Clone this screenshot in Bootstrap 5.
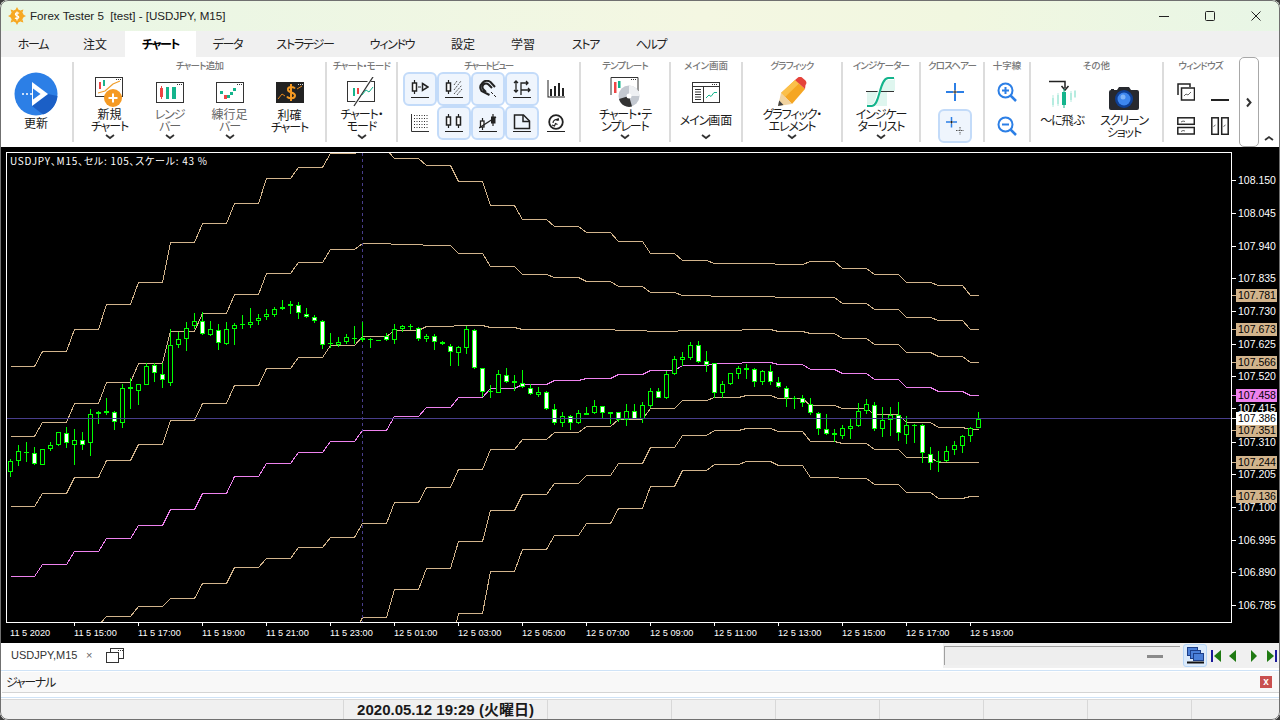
<!doctype html>
<html lang="ja">
<head>
<meta charset="utf-8">
<title>Forex Tester 5</title>
<link rel="stylesheet" href="https://cdn.jsdelivr.net/npm/bootstrap@5.3.0/dist/css/bootstrap.min.css">
<style>
html,body{margin:0;height:720px;overflow:hidden;background:#3c3c3c}
body{font-family:"Noto Sans CJK JP","Liberation Sans",sans-serif;font-size:12px;color:#222;font-feature-settings:"palt";line-height:1.2}
.ftwin{width:1280px;height:720px;position:relative;overflow:hidden;border-radius:8px;background:#f0f0f0}
.ftedge{position:absolute;inset:0;border:1px solid #707070;border-radius:8px;pointer-events:none}
.fttitle{height:31px;padding-right:1px;background:linear-gradient(90deg,#e8f6e5 0%,#f4f7e2 55%,#f1f7e0 75%,#e8f6e6 100%);font-family:"Liberation Sans",sans-serif;font-size:11.6px;color:#222}
.fttitle svg.logo{margin:0 4px 0 8px}
.titletxt{white-space:pre}
.winbtn{width:46px;height:31px}
.fttabs{height:26px;background:#f0f0f0;padding-left:1px}
.fttab{line-height:26px;font-size:12px;color:#222;white-space:nowrap;text-align:center;letter-spacing:-1.3px}
.fttab.kj{letter-spacing:0}
.fttab.on{background:#fff;font-weight:700;color:#000;letter-spacing:-1.5px}
.tw64{width:64px}.tw60{width:60px}.tw71{width:71px}.tw63{width:63px}.tw92{width:92px}.tw82{width:82px}.tw65{width:65px}.tw66{width:66px}
.ribbon{height:90px;background:#fff;position:relative}
.sepv{width:2px;background:#dcdcdc;margin:5px 0;flex:none}
.grp{flex:none;display:flex;flex-direction:column;align-items:stretch}
.gt{height:15px;line-height:16px;text-align:center;font-size:9.5px;color:#777;white-space:nowrap;font-weight:500;letter-spacing:-.8px}
.gtt{letter-spacing:-1.5px}
.gtk{letter-spacing:0}
.gb{flex:1;display:flex;justify-content:center}
.w72{width:72px}.w251{width:251px}.w69{width:69px}.w181{width:181px}.w88{width:88px}.w70{width:70px}.w98{width:98px}.w76{width:76px}.w62{width:62px}.w44{width:44px}.w131{width:131px}.w73{width:73px}
.rb{display:flex;flex-direction:column;align-items:center;width:60px;flex:none}
.rbw{width:88px}
.ia{height:36px;padding-top:4px;display:flex;align-items:center;justify-content:center}
.iacam{height:42px;padding-top:9px;display:flex;align-items:center;justify-content:center}
.iajmp{height:36px;padding-top:10px;display:flex;align-items:center;justify-content:center}
.lb{height:24px;line-height:12px;text-align:center;font-size:12px;color:#1a1a1a;display:flex;align-items:center;justify-content:center;white-space:nowrap;letter-spacing:-1.1px}
.lbk{letter-spacing:0}
.lbg{color:#666}
.lbd{padding-top:2px}
.lbone{height:14px}
.cv{height:10px;display:flex;align-items:center;justify-content:center}
.cellgrid{display:grid;grid-template-columns:repeat(5,34px);grid-auto-rows:34px;margin-left:5px;width:170px}
.cl{display:flex;align-items:center;justify-content:center;border:2px solid transparent;border-radius:6px}
.cl.hl{background:#eff5fd;border-color:#c3dbf9}
.updbtn{padding-top:15px;width:72px}
.updia{height:44px;display:flex;align-items:center;justify-content:center}
.stack2{display:flex;flex-direction:column;align-items:center;width:100%}
.sq34{width:34px;height:34px;display:flex;align-items:center;justify-content:center;border:2px solid transparent;border-radius:6px}
.sq34.hl{background:#eff5fd;border-color:#c3dbf9}
.crossw{margin-top:3px}
.crossr{padding-left:6px}
.oth{display:flex}
.oth1,.oth2{width:62px;display:flex;flex-direction:column;align-items:center}
.win4{display:grid;grid-template-columns:34px 34px;grid-auto-rows:34px;margin:3px 0 0 5px}
.scrbtn{position:absolute;left:1239px;top:0;width:20px;height:90px;border:1px solid #a8a8a8;border-radius:5px;background:#fff;display:flex;align-items:center;justify-content:center}
.collapse-up{position:absolute;left:1264px;top:72px}
.chartbox{height:496px;background:#000;line-height:0}
.strip{height:25px;background:#fff;font-family:"Liberation Sans",sans-serif;font-size:11px;color:#333}
.strip .tabname{margin-left:11px;width:66px}
.strip .xx{margin-left:9px;color:#666;font-size:11px}
.strip .cpy{margin-left:14px}
.navside{width:337px;height:25px;background:#f0f0f0;padding-left:1px}
.scrollish{width:236px;height:19px;background:#eee;border-top:1px solid #a0a0a0;border-left:1px solid #a0a0a0;display:flex;align-items:center;justify-content:flex-end;padding-right:17px}
.dashg{width:16px;height:3px;background:#8a8a8a}
.stkbtn{width:24px;height:23px;margin-left:3px;background:#dbeafb;border:1px solid #b7d6f7;border-radius:3px;display:flex;align-items:center;justify-content:center}
.n1{margin-left:4px}.n2{margin-left:8px}.n3{margin-left:15px}.n4{margin-left:10px}
.jrn{height:31px;background:#fff;padding-top:2px}
.jrnw{height:28px;border-top:1px solid #cfe3f7;border-bottom:1px solid #cfe3f7;padding:1px 0 0 2px}
.jrnin{height:21px;background:#f8f8f8;border-bottom:1px solid #d4d4d4;padding:0 8px 0 4px;font-size:12px;letter-spacing:-1.3px}
.jx{width:12px;height:12px;background:#c9504f;color:#fff;font:700 10px/12px "Liberation Sans",sans-serif;text-align:center;letter-spacing:0}
.stat{height:21px;background:#f0f0f0;border-top:1px solid #d8d8d8}
.stc{height:20px;border-right:1px solid #d8d8d8;flex:none}
.st1{width:344px}.st2{width:204px;font:700 15px/20px "Liberation Sans","Noto Sans CJK JP",sans-serif;text-align:center;color:#1a1a1a;white-space:nowrap}.st3{width:124px}.st4{width:104px}
</style>
</head>
<body>
<div class="ftwin d-flex flex-column">

<div class="fttitle d-flex align-items-center">
<svg class="logo" width="18" height="18" viewBox="0 0 18 18"><g fill="#f7a823"><circle cx="9" cy="9" r="6.500"/><path d="M9 0l1.600 3h-3.200zM9 18l1.600-3h-3.200zM0 9l3-1.600v3.200zM18 9l-3-1.600v3.200zM2.600 2.600l3.200 1-2.200 2.200zM15.400 2.600l-3.200 1 2.200 2.200zM2.600 15.400l3.200-1-2.200-2.200zM15.400 15.400l-3.200-1 2.200-2.200z"/></g><path d="M11 6.400c-.5-.8-3.600-1.200-3.600.8 0 1.900 3.400 1.100 3.400 3 0 1.700-3 1.600-3.800.7M9 4.500v9" fill="none" stroke="#fff" stroke-width="1.200"/></svg>
<span class="flex-grow-1 titletxt">Forex Tester 5  [test] - [USDJPY, M15]</span>
<div class="winbtn d-flex align-items-center justify-content-center"><svg width="12" height="12"><path d="M1 6.500h10" stroke="#222"/></svg></div>
<div class="winbtn d-flex align-items-center justify-content-center"><svg width="12" height="12"><rect x="1.500" y="1.500" width="9" height="9" rx="1" fill="none" stroke="#222"/></svg></div>
<div class="winbtn d-flex align-items-center justify-content-center"><svg width="12" height="12"><path d="M1.500 1.500l9 9M10.500 1.500l-9 9" stroke="#222"/></svg></div>
</div>

<div class="fttabs d-flex">
<div class="fttab tw64">ホーム</div><div class="fttab kj tw60">注文</div><div class="fttab on tw71">チャート</div><div class="fttab tw63">データ</div><div class="fttab tw92">ストラテジー</div><div class="fttab tw82">ウィンドウ</div><div class="fttab kj tw60">設定</div><div class="fttab kj tw60">学習</div><div class="fttab tw65">ストア</div><div class="fttab tw66">ヘルプ</div>
</div>

<div class="ribbon d-flex">
 <div class="grp w72"><div class="updbtn d-flex flex-column align-items-center">
  <div class="updia"><svg width="44" height="44" viewBox="0 0 44 44"><circle cx="22" cy="22" r="21.500" fill="#2c7fe6"/><path d="M18 34L34 22 43.500 24A21.500 21.500 0 0 1 29 42.500z" fill="#1b5fc6"/><path d="M18 10l16 12-16 12z" fill="#fff"/><path d="M19 16.500l7.500 5.500-7.500 5.500z" fill="#2c7fe6"/><path d="M8 22h2M12 22h2M16 22h3" stroke="#fff" stroke-width="1.500"/></svg></div>
  <div class="lb lbone lbk">更新</div></div></div>
 <div class="sepv"></div>
 <div class="grp w251"><div class="gt">チャート追加</div><div class="gb">
  <div class="rb"><div class="ia"><svg width="30" height="30" viewBox="0 0 30 30"><rect x=".5" y=".5" width="27" height="19" fill="#fff" stroke="#333"/><path d="M21 2.500h1M23 2.500h1M25 2.500h1" stroke="#333"/><path d="M4 5h2v7H4z" fill="#e44"/><path d="M8 3h2v6H8z" fill="#1bb38e"/><path d="M3 16l7-2 8-7 7-3" fill="none" stroke="#f0a030" stroke-width="1.300"/><circle cx="18" cy="21" r="9" fill="#f59a23"/><path d="M18 16.500v9M13.500 21h9" stroke="#fff" stroke-width="2"/></svg></div><div class="lb"><div><span class="lbk">新規</span><br>チャート</div></div><div class="cv"><svg width="10" height="6"><path d="M1 1l4 3 4-3" fill="none" stroke="#333" stroke-width="1.800"/></svg></div></div>
  <div class="rb"><div class="ia"><svg width="28" height="21" viewBox="0 0 28 21"><rect x=".5" y=".5" width="27" height="20" fill="#fff" stroke="#333"/><path d="M21 2.500h1M23 2.500h1M25 2.500h1" stroke="#333"/><path d="M4 6h3v9H4z" fill="#e44"/><path d="M5.500 4v13" stroke="#e44"/><path d="M10 5h3v12h-3zM16 5h4v12h-4z" fill="#14b48c"/></svg></div><div class="lb lbg"><div>レンジ<br>バー</div></div><div class="cv"><svg width="10" height="6"><path d="M1 1l4 3 4-3" fill="none" stroke="#333" stroke-width="1.800"/></svg></div></div>
  <div class="rb"><div class="ia"><svg width="28" height="21" viewBox="0 0 28 21"><rect x=".5" y=".5" width="27" height="20" fill="#fff" stroke="#333"/><path d="M21 2.500h1M23 2.500h1M25 2.500h1" stroke="#333"/><path d="M4 9h3v3H4z" fill="#14b48c"/><path d="M8 13h3v4H8z" fill="#e44"/><path d="M11 13h3v3h-3zM14 10h3v3h-3zM17 6h3v3h-3z" fill="#14b48c"/></svg></div><div class="lb lbg"><div><span class="lbk">練行足</span><br>バー</div></div><div class="cv"><svg width="10" height="6"><path d="M1 1l4 3 4-3" fill="none" stroke="#333" stroke-width="1.800"/></svg></div></div>
  <div class="rb"><div class="ia"><svg width="28" height="21" viewBox="0 0 28 21"><rect width="28" height="21" fill="#222"/><path d="M2 17l4-5 3 2" fill="none" stroke="#e88a1f"/><path d="M19 6.500C17 4 11.500 4.500 12 8c.5 3 7 2 7 5.500 0 3.500-6.500 3.500-8 1M15 2v17" fill="none" stroke="#f59a23" stroke-width="2"/><path d="M21 7l5-3" stroke="#e88a1f"/><path d="M22 2.500h1M24 2.500h1M26 2.500h1" stroke="#ddd"/></svg></div><div class="lb lbd"><div><span class="lbk">利確</span><br>チャート</div></div></div>
 </div></div>
 <div class="sepv"></div>
 <div class="grp w69"><div class="gt">チャート・モード</div><div class="gb">
  <div class="rb"><div class="ia"><svg width="30" height="30" viewBox="0 0 30 30"><rect x=".5" y="4.500" width="27" height="20" fill="#fff" stroke="#333"/><path d="M8 28L25 0" stroke="#fff" stroke-width="3"/><path d="M7 29L26 0" stroke="#333" stroke-width="1.300"/><path d="M6 11h2v8H6z" fill="#14b48c"/><path d="M10 11h2v6h-2z" fill="#e44"/><path d="M15 18l4-5 3 2 4-5" fill="none" stroke="#14b48c"/></svg></div><div class="lb"><div>チャート・<br>モード</div></div><div class="cv"><svg width="10" height="6"><path d="M1 1l4 3 4-3" fill="none" stroke="#333" stroke-width="1.800"/></svg></div></div>
 </div></div>
 <div class="sepv"></div>
 <div class="grp w181"><div class="gt gtt">チャートビュー</div>
  <div class="cellgrid">
   <div class="cl hl"><svg width="18" height="18" viewBox="0 0 18 18" fill="none" stroke="#222"><path d="M3.500 0v14" stroke-width="1.200"/><rect x="1.500" y="3" width="4" height="8" fill="#fff" stroke-width="1.500"/><path d="M7 7h3"/><path d="M11.500 3.500L17 7l-5.500 3.500z" stroke-width="1.500"/><path d="M0 17.500h18"/></svg></div>
   <div class="cl hl"><svg width="18" height="18" viewBox="0 0 18 18" fill="none" stroke="#222"><path d="M3.500 0v14" stroke-width="1.200"/><rect x="1.500" y="3" width="4" height="8" fill="#fff" stroke-width="1.500"/><path d="M9 5l3-4M9 10l7-9M9 14l8-9M12 15l5-6" stroke="#555" stroke-dasharray="2 1"/><path d="M0 17.500h18"/></svg></div>
   <div class="cl hl"><svg width="18" height="18" viewBox="0 0 18 18" fill="none" stroke="#222"><path d="M7 12L4.500 9.500a3.500 3.500 0 0 1 5-5L13 8M10.500 15L2.500 11A6.500 6.500 0 0 1 11.500 2L16 7" stroke-width="2"/><path d="M12 12l2 2M15 15l2 2"/></svg></div>
   <div class="cl hl"><svg width="18" height="18" viewBox="0 0 18 18" fill="none" stroke="#222" stroke-width="1.300"><path d="M3 1v11M1 3l2-2 2 2M1 10l2 2 2-2M8 15V3h7M13 1l2 2-2 2M8 10h9M15 8l2 2-2 2"/><path d="M0 17.500h18" stroke-width="1"/></svg></div>
   <div class="cl"><svg width="18" height="18" viewBox="0 0 18 18" fill="#222"><path d="M.5 0v17.500H18V16.500H1.500V0z"/><path d="M3 9h2v7H3zM7 6h2v10H7zM11 3h2v13h-2zM15 8h2v8h-2z"/></svg></div>
   <div class="cl"><svg width="18" height="18" viewBox="0 0 18 18"><path d="M.5 0v17.500H18" fill="none" stroke="#333"/><path d="M3 1.500h15M3 4.500h15M3 7.500h15M3 10.500h15M3 13.500h15" stroke="#333" stroke-dasharray="1 1.500"/></svg></div>
   <div class="cl hl"><svg width="18" height="18" viewBox="0 0 18 18" fill="none" stroke="#222"><path d="M3.500 0v14M13.500 0v14" stroke-width="1.200"/><rect x="1.500" y="3" width="4" height="8" fill="#fff" stroke-width="1.500"/><rect x="11.500" y="3" width="4" height="8" fill="#fff" stroke-width="1.500"/><path d="M0 17.500h18"/></svg></div>
   <div class="cl hl"><svg width="18" height="18" viewBox="0 0 18 18" fill="none" stroke="#222"><path d="M3.500 4v12M14 0v12" stroke-width="1.200"/><rect x="1.500" y="7" width="3.500" height="6" fill="#fff" stroke-width="1.300"/><rect x="12.500" y="3" width="3.500" height="6" fill="#222"/><path d="M0 14L17 3" stroke-width="1.300"/><path d="M0 17.500h18"/></svg></div>
   <div class="cl hl"><svg width="18" height="18" viewBox="0 0 18 18" fill="none" stroke="#222" stroke-width="1.500"><path d="M1.500 14.500V1h9l6 6v7.500z"/><path d="M10 1v6.500h6.500"/><path d="M0 17.500h18" stroke-width="1"/></svg></div>
   <div class="cl"><svg width="18" height="18" viewBox="0 0 18 18" fill="none" stroke="#222"><circle cx="9" cy="8" r="6.800" stroke-width="1.800"/><path d="M6 9c0-3 3-4 5-3.500M11 4l.5 2-2 .5M5 11l2.500 1 1-2.500 2 1" stroke-width="1.200"/><path d="M0 17.500h18"/></svg></div>
  </div>
 </div>
 <div class="sepv"></div>
 <div class="grp w88"><div class="gt">テンプレート</div><div class="gb">
  <div class="rb rbw"><div class="ia"><svg width="30" height="30" viewBox="0 0 30 30"><path d="M1 18V.5h27V14" fill="#fff" stroke="#333"/><path d="M21 2.500h1M23 2.500h1M25 2.500h1" stroke="#333"/><path d="M4 5h2.500v11H4z" fill="#e44"/><path d="M8 4h2.500v7H8z" fill="#14b48c"/><circle cx="19" cy="19" r="10.500" fill="#c3c8d0"/><path d="M19 19L9 22a10.500 10.500 0 0 0 13 7.500z" fill="#333"/><path d="M19 8.500a10.500 10.500 0 0 1 10.500 10.500H19z" fill="#eef0f3"/><circle cx="19" cy="19" r="2.500" fill="#fff"/></svg></div><div class="lb"><div>チャート・テ<br>ンプレート</div></div><div class="cv"><svg width="10" height="6"><path d="M1 1l4 3 4-3" fill="none" stroke="#333" stroke-width="1.800"/></svg></div></div>
 </div></div>
 <div class="sepv"></div>
 <div class="grp w70"><div class="gt gtk">メイン画面</div><div class="gb">
  <div class="rb"><div class="ia"><svg width="28" height="21" viewBox="0 0 28 21" fill="none" stroke="#333"><rect x=".5" y=".5" width="27" height="20"/><path d="M.5 4.500h27M11.500 4.500v16"/><path d="M20 2.500h1M22 2.500h1M24 2.500h1"/><path d="M3 7.500h6M3 10h6M3 12.500h6M3 15h6M3 17.500h6"/><path d="M14 16l3-3 2 1.500 3-4 3 0" stroke="#14b48c"/></svg></div><div class="lb"><span>メイン<span class="lbk">画面</span></span></div><div class="cv"><svg width="10" height="6"><path d="M1 1l4 3 4-3" fill="none" stroke="#333" stroke-width="1.800"/></svg></div></div>
 </div></div>
 <div class="sepv"></div>
 <div class="grp w98"><div class="gt">グラフィック</div><div class="gb">
  <div class="rb rbw"><div class="ia"><svg width="30" height="30" viewBox="0 0 30 30"><path d="M4 16L18 3l10 9-13 15z" fill="#f5a623"/><path d="M4 16L18 3l4 3.500L8 20z" fill="#fbc04a"/><path d="M18 3l3-2.500a3 3 0 0 1 4 0l3.500 3a3.500 3.500 0 0 1 0 4.500L28 12z" fill="#e5423a"/><path d="M4 16l-3 13 14-2z" fill="#f1d3a0"/><path d="M2.200 23.500L1 29l5.500-1z" fill="#444"/></svg></div><div class="lb"><div>グラフィック・<br>エレメント</div></div><div class="cv"><svg width="10" height="6"><path d="M1 1l4 3 4-3" fill="none" stroke="#333" stroke-width="1.800"/></svg></div></div>
 </div></div>
 <div class="sepv"></div>
 <div class="grp w76"><div class="gt">インジケーター</div><div class="gb">
  <div class="rb rbw"><div class="ia"><svg width="30" height="30" viewBox="0 0 30 30"><path d="M1 15h8c5 0 5-14 12-14h8v13h-8v15H1z" fill="#dff6ef"/><path d="M0 14.500h28" stroke="#333"/><path d="M2 29h4c7 0 6-26 15-27.500h7" fill="none" stroke="#fff" stroke-width="3"/><path d="M1 29h5c8 0 7-27 16-28h6" fill="none" stroke="#14b48c" stroke-width="2"/></svg></div><div class="lb"><div>インジケー<br>ターリスト</div></div><div class="cv"><svg width="10" height="6"><path d="M1 1l4 3 4-3" fill="none" stroke="#333" stroke-width="1.800"/></svg></div></div>
 </div></div>
 <div class="sepv"></div>
 <div class="grp w62"><div class="gt">クロスヘアー</div>
  <div class="stack2 crossw crossr"><div class="sq34"><svg width="18" height="18" viewBox="0 0 18 18"><path d="M0 9h7M11 9h7M9 0v7M9 11v7" stroke="#2c7fe6" stroke-width="2"/><path d="M7 9h4M9 7v4" stroke="#222"/></svg></div>
  <div class="sq34 hl"><svg width="18" height="18" viewBox="0 0 18 18"><path d="M0 5h4M7 5h4M5.500 0v4M5.500 6.500v4" stroke="#2c7fe6" stroke-width="1.500"/><path d="M4 5h3M5.500 4v2.500" stroke="#222"/><path d="M10 13.500h8M14 10v8" stroke="#555" stroke-dasharray="1.500 1"/></svg></div></div>
 </div>
 <div class="sepv"></div>
 <div class="grp w44"><div class="gt gtk">十字線</div>
  <div class="stack2 crossw"><div class="sq34"><svg width="20" height="20" viewBox="0 0 20 20" fill="none" stroke="#2c7fe6" stroke-width="2"><circle cx="8.500" cy="8.500" r="7"/><path d="M13.500 13.500l5.500 5.500" stroke-width="2.500"/><path d="M5 8.500h7M8.500 5v7"/></svg></div>
  <div class="sq34"><svg width="20" height="20" viewBox="0 0 20 20" fill="none" stroke="#2c7fe6" stroke-width="2"><circle cx="8.500" cy="8.500" r="7"/><path d="M13.500 13.500l5.500 5.500" stroke-width="2.500"/><path d="M5 8.500h7"/></svg></div></div>
 </div>
 <div class="sepv"></div>
 <div class="grp w131"><div class="gt gtk">その他</div><div class="oth">
  <div class="oth1"><div class="iajmp"><svg width="28" height="30" viewBox="0 0 28 30"><path d="M1 1.500h16V8M13.500 6l3.500 4 3.500-4" fill="none" stroke="#222" stroke-width="1.500"/><path d="M4 18h2v7H4zM9 15h2v9H9zM22 13h2v7h-2zM26 11h2v6h-2z" fill="#b6ece0"/><path d="M5 15v12M10 13v13M23 11v11M27 10v8" stroke="#b6ece0"/><path d="M14 12h4v13h-4z" fill="#14b48c"/><path d="M16 9v19" stroke="#14b48c"/></svg></div><div class="lb"><span>〜に<span class="lbk">飛</span>ぶ</span></div></div>
  <div class="oth2"><div class="iacam"><svg width="30" height="24" viewBox="0 0 30 24"><path d="M0 6a2 2 0 0 1 2-2h6l2-3h10l2 3h6a2 2 0 0 1 2 2v16a2 2 0 0 1-2 2H2a2 2 0 0 1-2-2z" fill="#27292f"/><path d="M2 3h3v1H2z" fill="#27292f"/><circle cx="15" cy="13" r="9" fill="#0e3f94"/><circle cx="15" cy="13" r="6.500" fill="#3d86ee"/><circle cx="14" cy="11" r="2.500" fill="#7fb4f7"/></svg></div><div class="lb"><div>スクリーン<br>ショット</div></div></div>
 </div></div>
 <div class="sepv"></div>
 <div class="grp w73"><div class="gt">ウィンドウズ</div>
  <div class="win4">
   <div class="sq34"><svg width="18" height="18" viewBox="0 0 18 18" fill="none" stroke="#222" stroke-width="1.500"><path d="M1 12V1h12v3"/><rect x="4.500" y="5" width="13" height="12" fill="#fff"/><path d="M7 13l2-2 2 1 3-3" stroke="#666" stroke-width="1"/></svg></div>
   <div class="sq34"><svg width="18" height="18" viewBox="0 0 18 18"><path d="M0 17h18" stroke="#222" stroke-width="2"/></svg></div>
   <div class="sq34"><svg width="18" height="18" viewBox="0 0 18 18" fill="none" stroke="#222" stroke-width="1.500"><rect x=".8" y=".8" width="16.500" height="6.500"/><rect x=".8" y="10.500" width="16.500" height="6.500"/><path d="M4 5l2-1 2 .5M4 14.500l2-1 2 .5" stroke="#666" stroke-width="1"/></svg></div>
   <div class="sq34"><svg width="18" height="18" viewBox="0 0 18 18" fill="none" stroke="#222" stroke-width="1.500"><rect x=".8" y=".8" width="6.500" height="16.500"/><rect x="10.700" y=".8" width="6.500" height="16.500"/><path d="M2.500 9.500l2-1.500M12.500 9.500l2-1.500" stroke="#666" stroke-width="1"/></svg></div>
  </div>
 </div>
 <div class="scrbtn"><svg width="8" height="11"><path d="M2 1.500l3.500 4-3.500 4" fill="none" stroke="#333" stroke-width="2"/></svg></div>
 <div class="collapse-up"><svg width="10" height="6"><path d="M1 5l4-3 4 3" fill="none" stroke="#333" stroke-width="1.800"/></svg></div>
</div>

<div class="chartbox"><svg id="chart" width="1280" height="496" viewBox="0 147 1280 496" shape-rendering="crispEdges" font-family="Liberation Sans, Noto Sans CJK JP, sans-serif" xmlns="http://www.w3.org/2000/svg"></svg></div>

<div class="strip d-flex align-items-center">
 <span class="tabname">USDJPY,M15</span><span class="xx">×</span>
 <svg class="cpy" width="18" height="15" viewBox="0 0 18 15" fill="none" stroke="#333"><rect x="4.500" y=".5" width="13" height="10" fill="#fff"/><path d="M12 2.500h1M14 2.500h1M16 2.500h1"/><rect x=".5" y="4.500" width="12" height="10" fill="#fff"/></svg>
 <span class="flex-grow-1"></span>
 <div class="navside d-flex align-items-center">
  <div class="scrollish"><div class="dashg"></div></div>
  <div class="stkbtn"><svg width="19" height="17" viewBox="0 0 19 17"><g fill="#4a7fd8" stroke="#1d3f88"><rect x="1.500" y=".5" width="10" height="8"/><rect x="4.500" y="3.500" width="10" height="8"/><rect x="7.500" y="6.500" width="10" height="7"/></g><path d="M1 15.500h17" stroke="#111" stroke-width="2"/></svg></div>
  <svg class="n1" width="10" height="12" viewBox="0 0 10 12"><path d="M0 0h2v12H0z" fill="#1a1a9a"/><path d="M10 0v12L3 6z" fill="#1f7a12"/></svg>
  <svg class="n2" width="7" height="12" viewBox="0 0 7 12"><path d="M7 0v12L0 6z" fill="#1f7a12"/></svg>
  <svg class="n3" width="6" height="12" viewBox="0 0 6 12"><path d="M0 0v12l6-6z" fill="#1f7a12"/></svg>
  <svg class="n4" width="10" height="12" viewBox="0 0 10 12"><path d="M8 0h2v12H8z" fill="#1a1a9a"/><path d="M0 0v12l7-6z" fill="#1f7a12"/></svg>
 </div>
</div>

<div class="jrn"><div class="jrnw"><div class="jrnin d-flex align-items-center justify-content-between"><span>ジャーナル</span><span class="jx">x</span></div></div></div>

<div class="stat d-flex">
 <div class="stc st1"></div><div class="stc st2">2020.05.12 19:29 (火曜日)</div><div class="stc st3"></div><div class="stc st4"></div><div class="stc st4"></div><div class="stc st4"></div><div class="stc st4"></div><div class="stc st4"></div>
</div>

<div class="ftedge"></div>
</div>

<script src="https://cdn.jsdelivr.net/npm/bootstrap@5.3.0/dist/js/bootstrap.bundle.min.js"></script>
<script>
// [wickTop, bodyTop, bodyBottom, wickBottom, white?] in zoomed pixels
var z6=[[508,514,545,560,0],[465,484,514,527,0],[457,486,490,515,0],[472,488,523,525,1],[478,478,525,525,0],[457,466,478,482,0],[425,427,466,467,0],[412,428,460,473,1],[418,451,464,525,0],[427,451,464,480,1],[358,371,460,498,0],[362,367,371,402,0],[324,364,368,375,0],[362,365,397,420,1],[283,295,398,414,0],[265,292,298,357,1],[283,283,302,345,0],[218,229,284,284,0],[220,226,250,276,1],[218,251,271,293,1],[118,166,278,288,0],[125,146,164,174,0],[95,113,146,182,0],[70,92,108,118,0],[65,92,133,135,1],[94,118,134,138,0],[102,119,160,180,1],[97,116,161,164,0],[100,106,116,165,0],[75,102,104,118,0],[55,95,104,115,0],[72,83,92,105,0],[58,73,82,90,0],[52,58,74,80,0],[30,50,58,60,0],[33,43,49,72,0],[37,44,70,86,1],[55,71,81,84,1],[75,80,93,100,1],[90,94,166,177,1]];
var z7=[[68,100,103,113,0],[82,97,105,112,0],[72,82,97,102,0],[48,83,87,102,0],[35,85,91,95,1],[85,86,91,113,1],[90,90,92,92,0],[68,77,91,92,1],[43,58,91,102,0],[45,49,56,65,0],[42,48,51,60,0],[50,54,88,92,1],[73,79,88,95,0],[72,79,97,120,1],[92,97,103,106,0],[103,107,127,167,1],[108,112,130,167,0],[47,58,113,132,0],[58,59,175,178,1],[173,175,247,260,1],[225,244,247,263,0],[180,193,248,250,0],[175,194,217,220,1],[195,214,218,243,0],[180,218,232,235,1],[222,235,253,255,1],[230,246,254,262,0],[243,245,298,300,1],[283,298,340,345,1],[307,319,340,352,0],[315,319,340,360,1],[300,310,340,342,0],[292,310,314,315,0],[270,289,310,312,0],[288,289,310,327,1],[305,307,311,342,0],[305,307,330,335,1],[282,304,331,348,0],[283,304,327,328,1],[277,286,327,338,0],[233,243,287,293,0],[235,244,265,265,1]];
var z8=[[122,133,205,206,0],[78,88,133,135,0],[65,82,89,107,0],[37,45,83,90,0],[33,46,95,100,1],[63,94,104,125,1],[98,100,188,205,1],[152,162,188,205,0],[128,130,163,165,0],[108,114,131,147,0],[102,115,119,147,0],[113,116,155,172,1],[120,122,155,165,0],[105,122,157,165,1],[142,157,172,175,1],[167,173,205,230,1],[198,203,206,237,0],[195,203,220,230,1],[203,222,250,255,1],[247,250,298,315,1],[252,298,313,315,1],[297,310,316,337,1],[285,295,317,327,0],[267,287,296,327,0],[220,244,287,290,0],[208,223,244,252,0],[215,224,296,302,1],[232,271,296,320,0],[230,254,271,318,0],[216,254,310,332,1],[258,286,314,342,0],[283,284,287,338,0],[283,284,370,400,1],[352,371,400,420,1],[362,392,396,425,0],[347,364,392,395,0],[332,346,361,375,0],[315,319,349,368,0],[290,293,319,335,0],[247,266,293,295,0]];
function mp(a,o){return a.map(function(r){return [o+r[0]/3,o+r[1]/3,o+r[2]/3,o+r[3]/3,r[4]]})}
var candles=mp(z6,290).concat(mp(z7,310),mp(z8,330));
var C=[576.3,564.3,551.3,538.3,525,509.3,493,476.3,463.3,452.3,441,429.8,416.2,406.7,397.3,388.3,384.3,380.3,377.7,374.3,369.5,365.3,363.3,362.3,364.3,369.3,373.3,379.3,387.3,391.3,395.3];
var D=[70,71,74,78,81,89,90,91,95,95,96,93.5,86.2,80.7,72,61,55,51.5,48.5,44.4,38.8,35,33.5,33,33.5,36,35,35,35,35.5,33.4];
var TAN='#d2b48c',VIO='#ee82ee',BL='#483d8b';
function cx(i){return 10.5+8*i}
var s='<defs><clipPath id="pane"><rect x="7" y="153" width="1224" height="469"/></clipPath></defs>';
s+='<g clip-path="url(#pane)">';
[-3,-2,-1,0,1,2,3].forEach(function(k){
  var pts=[];
  for(var i=0;i<122;i++){var j=Math.floor(i/4);pts.push(cx(i)+','+(Math.round(C[j]+k*D[j])+.5));}
  s+='<polyline fill="none" stroke="'+(k==0?VIO:TAN)+'" points="'+pts.join(' ')+'"/>';
});
s+='<path d="M362.500 153V622" stroke="'+BL+'" stroke-dasharray="3 3"/>';
candles.forEach(function(c,i){
  var x=cx(i),t=Math.round(c[0]),a=Math.round(c[1]),b=Math.round(c[2]),e=Math.round(c[3]);
  if(b-a<1)b=a+1;
  if(e>t)s+='<path d="M'+x+' '+t+'V'+e+'" stroke="#0f0"/>';
  if(b-a<=2){s+='<rect x="'+(x-2.5)+'" y="'+a+'" width="5" height="'+(b-a)+'" fill="#0f0"/>';}
  else s+='<rect x="'+(x-2)+'" y="'+(a+.5)+'" width="4" height="'+(b-a-1)+'" fill="'+(c[4]?'#fff':'#000')+'" stroke="#0f0"/>';
});
s+='</g>';
s+='<path d="M7 418.500H1232" stroke="'+BL+'"/>';
s+='<rect x="6.500" y="152.500" width="1225" height="470" fill="none" stroke="#fff"/>';
s+='<text x="10" y="165" font-size="10" fill="#fff" textLength="197" lengthAdjust="spacing" font-family="Noto Sans CJK JP, sans-serif">USDJPY、M15、セル: 105、スケール: 43 %</text>';
var yl=[['108.150',180],['108.045',213],['107.940',246],['107.835',278],['107.730',311],['107.625',344],['107.520',376],['107.415',408],['107.310',442],['107.205',474],['107.100',507],['106.995',540],['106.890',572],['106.785',605]];
yl.forEach(function(l){s+='<path d="M1232 '+(l[1]+.5)+'h4" stroke="#fff"/><text x="1238" y="'+(l[1]+4)+'" font-size="10.500" fill="#fff">'+l[0]+'</text>';});
[['107.781',295,TAN],['107.673',329,TAN],['107.566',362,TAN],['107.458',395,VIO],['107.351',430,TAN],['107.244',462,TAN],['107.136',496,TAN],['107.386',418,'#fff']].forEach(function(l){
  s+='<path d="M1232 '+(l[1]+.5)+'h4" stroke="'+l[2]+'"/><rect x="1236" y="'+(l[1]-6)+'" width="41" height="13" fill="'+l[2]+'"/><text x="1238" y="'+(l[1]+4)+'" font-size="10.500" fill="#000">'+l[0]+'</text>';
});
var xl=['11 5 2020','11 5 15:00','11 5 17:00','11 5 19:00','11 5 21:00','11 5 23:00','12 5 01:00','12 5 03:00','12 5 05:00','12 5 07:00','12 5 09:00','12 5 11:00','12 5 13:00','12 5 15:00','12 5 17:00','12 5 19:00'];
xl.forEach(function(t,i){var x=10+64*i;if(i)s+='<path d="M'+(x+.5)+' 622v4" stroke="#fff"/>';s+='<text x="'+x+'" y="636" font-size="9.200" fill="#fff">'+t+'</text>';});
document.getElementById('chart').innerHTML=s;
</script>
</body>
</html>
